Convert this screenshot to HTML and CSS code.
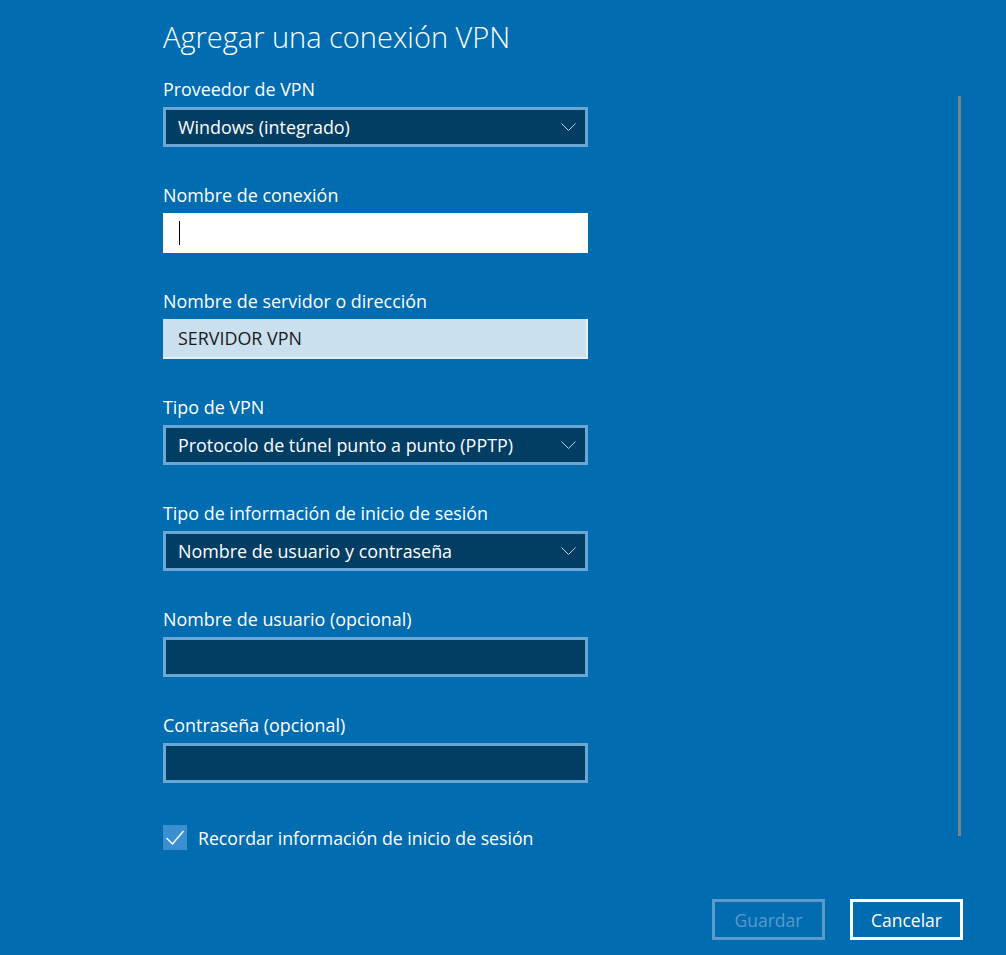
FILE: index.html
```html
<!DOCTYPE html>
<html lang="es">
<head>
<meta charset="utf-8">
<title>Agregar una conexión VPN</title>
<link rel="stylesheet" href="styles.css">
</head>
<body>
<div class="page">
  <div class="form">
    <h1 class="title">Agregar una conexión VPN</h1>

    <div class="field">
      <div class="label">Proveedor de VPN</div>
      <div class="box select"><span>Windows (integrado)</span><svg class="chev" width="15" height="8" viewBox="0 0 15 8"><path d="M0.5 0.5 L7.5 7.5 L14.5 0.5" fill="none" stroke="#b7d2e6" stroke-width="1"/></svg></div>
    </div>

    <div class="field">
      <div class="label">Nombre de conexión</div>
      <div class="box input-white"><span class="caret"></span></div>
    </div>

    <div class="field">
      <div class="label">Nombre de servidor o dirección</div>
      <div class="box input-light"><span>SERVIDOR VPN</span></div>
    </div>

    <div class="field">
      <div class="label">Tipo de VPN</div>
      <div class="box select"><span>Protocolo de túnel punto a punto (PPTP)</span><svg class="chev" width="15" height="8" viewBox="0 0 15 8"><path d="M0.5 0.5 L7.5 7.5 L14.5 0.5" fill="none" stroke="#b7d2e6" stroke-width="1"/></svg></div>
    </div>

    <div class="field">
      <div class="label">Tipo de información de inicio de sesión</div>
      <div class="box select"><span>Nombre de usuario y contraseña</span><svg class="chev" width="15" height="8" viewBox="0 0 15 8"><path d="M0.5 0.5 L7.5 7.5 L14.5 0.5" fill="none" stroke="#b7d2e6" stroke-width="1"/></svg></div>
    </div>

    <div class="field">
      <div class="label">Nombre de usuario (opcional)</div>
      <div class="box select"></div>
    </div>

    <div class="field">
      <div class="label">Contraseña (opcional)</div>
      <div class="box select"></div>
    </div>

    <div class="check-row">
      <span class="checkbox"><svg width="24" height="25" viewBox="0 0 24 25"><path d="M3.5 13 L9.5 19 L20.5 6" fill="none" stroke="#ffffff" stroke-width="1.5"/></svg></span>
      <span class="check-label">Recordar información de inicio de sesión</span>
    </div>
  </div>

  <div class="scrollbar"></div>

  <div class="buttons">
    <button class="btn disabled">Guardar</button>
    <button class="btn primary">Cancelar</button>
  </div>
</div>
</body>
</html>
```

FILE: styles.css
```css
html, body {
  margin: 0;
  padding: 0;
  background: #016cb0;
}
body {
  font-family: "Open Sans", "Noto Sans", "Liberation Sans", sans-serif;
  color: #ffffff;
}
.page {
  width: 1006px;
  height: 955px;
  position: relative;
  overflow: hidden;
}
.form {
  width: 425px;
  margin-left: 163px;
  padding-top: 17px;
  display: flex;
  flex-direction: column;
}
.title {
  margin: 0 0 19px 0;
  font-weight: 300;
  font-size: 29px;
  line-height: 40px;
  height: 40px;
}
.field {
  display: flex;
  flex-direction: column;
  height: 106px;
}
.label {
  font-size: 17.9px;
  line-height: 26px;
  height: 26px;
  margin-bottom: 5px;
}
.box {
  box-sizing: border-box;
  height: 40px;
  width: 425px;
  display: flex;
  align-items: center;
  padding: 0 9px 0 12px;
  font-size: 17.9px;
}
.select {
  background: #023d64;
  border: 3px solid #6aa7d4;
  justify-content: space-between;
  color: #ffffff;
}
.input-white {
  background: #ffffff;
  border: 3px solid #ffffff;
}
.caret {
  display: block;
  width: 1px;
  height: 24px;
  background: #000000;
  margin-left: 1px;
}
.input-light {
  background: #cbe0ee;
  border-style: solid;
  border-width: 0 2px 2px 0;
  border-color: #e6f0f7;
  padding-left: 15px;
  color: #1a1a1a;
}
.check-row {
  display: flex;
  align-items: center;
  margin-top: 7px;
  height: 25px;
}
.checkbox {
  width: 24px;
  height: 25px;
  background: #3a8fd1;
  display: flex;
  align-items: center;
  justify-content: center;
  margin-right: 11px;
}
.check-label {
  font-size: 17.7px;
}
.scrollbar {
  position: absolute;
  left: 958px;
  top: 96px;
  width: 3px;
  height: 740px;
  background: #7d8389;
}
.buttons {
  position: absolute;
  left: 712px;
  top: 899px;
  display: flex;
  gap: 25px;
}
.btn {
  box-sizing: border-box;
  width: 113px;
  height: 41px;
  background: transparent;
  font-family: inherit;
  font-size: 17.5px;
  padding: 0;
}
.btn.disabled {
  border: 3px solid #5a9bcc;
  color: #5a9bcc;
}
.btn.primary {
  border: 3px solid #ffffff;
  color: #ffffff;
}
```
